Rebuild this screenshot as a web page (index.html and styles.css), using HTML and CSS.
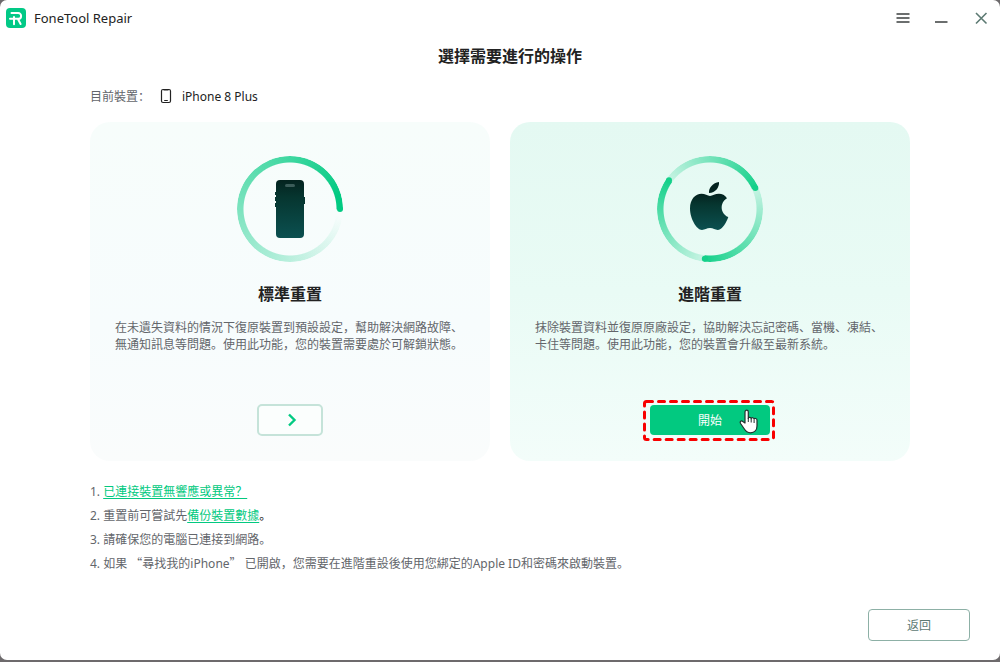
FILE: index.html
```html
<!DOCTYPE html>
<html lang="zh-Hans">
<head>
<meta charset="utf-8">
<meta name="viewport" content="width=device-width, initial-scale=1">
<title>FoneTool Repair</title>
<link rel="stylesheet" href="styles.css">
</head>
<body>
<div class="window">
  <header class="titlebar">
    <svg class="logo" viewBox="0 0 20 20" aria-hidden="true">
      <rect width="20" height="20" rx="4" fill="#02c986"/>
      <path d="M5.500 5H12.200a2.900 2.900 0 0 1 0 5.800H4M8 9v7.300M12.200 11.500l2.400 4.500" fill="none" stroke="#fff" stroke-width="2" stroke-linecap="round" stroke-linejoin="round"/>
    </svg>
    <span class="app-name">FoneTool Repair</span>
    <div class="window-controls">
      <button class="control" type="button" aria-label="選單"><svg viewBox="0 0 14 14"><path d="M.5 3h13M.5 7h13M.5 11h13" stroke="#6b6e6e" stroke-width="1.8"/></svg></button>
      <button class="control" type="button" aria-label="最小化"><svg viewBox="0 0 14 14"><path d="M0 11h12.500" stroke="#6b6e6e" stroke-width="2"/></svg></button>
      <button class="control" type="button" aria-label="關閉"><svg viewBox="0 0 14 14"><path d="M2 2l10.500 10.500M12.500 2L2 12.500" stroke="#5d7a73" stroke-width="1.600"/></svg></button>
    </div>
  </header>
  <main class="content">
    <h1 class="title">選擇需要進行的操作</h1>
    <div class="device">
      <span class="device-label">目前裝置：</span>
      <svg class="device-icon" viewBox="0 0 12 16" aria-hidden="true"><rect x="1.500" y="1.500" width="9" height="13" rx="1.500" fill="none" stroke="#222" stroke-width="1.200"/><path d="M3.500 2h5M4.200 12.500h3.600" stroke="#222" stroke-width="1.200"/></svg>
      <span class="device-name">iPhone 8 Plus</span>
    </div>
    <div class="cards">
      <section class="card card-standard">
        <div class="ring ring-single">
          <svg viewBox="0 0 106 106" aria-hidden="true">
            <defs><linearGradient id="dark" x1="0" y1="0" x2="0" y2="1"><stop offset="0" stop-color="#04231f"/><stop offset=".3" stop-color="#063630"/><stop offset="1" stop-color="#0b5050"/></linearGradient></defs>
            <circle cx="103" cy="53" r="3" fill="#02ca82"/>
            <path d="M38 36h2v3h-2zM38 41h2v4h-2zM38 47h2v4h-2zM66 41h2v7h-2z" fill="#063630"/>
            <rect x="39" y="24" width="28" height="58" rx="4" fill="url(#dark)"/>
            <rect x="48" y="28" width="10" height="3" rx="1.500" fill="#3b5c59"/>
          </svg>
        </div>
        <h2 class="card-title">標準重置</h2>
        <p class="card-text">在未遺失資料的情況下復原裝置到預設設定，幫助解決網路故障、無通知訊息等問題。使用此功能，您的裝置需要處於可解鎖狀態。</p>
        <button class="next" type="button" aria-label="標準重置"><svg viewBox="0 0 12 14"><path d="M3 1.500l5.500 5.500-5.500 5.500" fill="none" stroke="#02ca82" stroke-width="2.400"/></svg></button>
      </section>
      <section class="card card-advanced">
        <div class="ring ring-triple">
          <svg viewBox="0 0 106 106" aria-hidden="true">
            <circle cx="98.300" cy="31.900" r="3" fill="#15d08a"/>
            <circle cx="47.800" cy="102.700" r="3" fill="#15d08a"/>
            <circle cx="12" cy="24.300" r="3" fill="#15d08a"/>
            <path d="M62 26c.5 5-3.500 11-10 11-.6-5 4-10.300 10-11z" fill="#04231f"/>
            <path d="M53 40c2.500 0 5-2.200 9-2.200 3 0 6 1.500 8 4.400-8 4.800-6.500 15.800 1.300 18.800-1.700 5-5.800 12.800-10.300 13-3 .1-4.500-1.900-8-1.900s-5 1.900-8 1.900c-5 0-12-11-12-21.500 0-9.500 5.500-14.700 11.500-14.700 3.500 0 6 2.200 8.500 2.200z" fill="url(#dark)"/>
          </svg>
        </div>
        <h2 class="card-title">進階重置</h2>
        <p class="card-text">抹除裝置資料並復原原廠設定，協助解決忘記密碼、當機、凍結、卡住等問題。使用此功能，您的裝置會升級至最新系統。</p>
        <div class="start-wrap">
          <button class="start" type="button">開始</button>
          <svg class="highlight" viewBox="0 0 132 41" aria-hidden="true"><rect x="1.500" y="1.500" width="129" height="38" rx="2" fill="none" stroke="#f80000" stroke-width="3" stroke-dasharray="6 6" stroke-linecap="round"/></svg>
          <svg class="pointer" viewBox="0 0 20 25" aria-hidden="true"><path d="M6 14V3c0-2.500 3.300-2.500 3.300 0v6.500c0-1.600 2.900-1.600 2.900.2 0-1.500 2.900-1.300 2.900.6 0-1.500 2.900-1 2.900.8v6c0 4-2.500 6.700-6.500 6.700-3.500 0-5-1.800-6.500-4.300L1.600 14.500c-1.200-2 .8-3.200 2.200-2z" fill="#fff" stroke="#22302d" stroke-width="1.200" stroke-linejoin="round"/><path d="M9.300 9v4M12.200 10v3.500M15.100 11v3" stroke="#22302d"/></svg>
        </div>
      </section>
    </div>
    <ol class="notes">
      <li><a href="#">已連接裝置無響應或異常？</a></li>
      <li>重置前可嘗試先<a href="#">備份裝置數據</a><span class="stop">。</span></li>
      <li>請確保您的電腦已連接到網路。</li>
      <li>如果 <span class="wide">“</span>尋找我的iPhone<span class="wide">”</span> 已開啟，您需要在進階重設後使用您綁定的Apple ID和密碼來啟動裝置。</li>
    </ol>
  </main>
  <footer class="footer"><button class="back" type="button">返回</button></footer>
</div>
</body>
</html>
```

FILE: styles.css
```css
* { box-sizing: border-box; }
body {
  margin: 0;
  background: #6d6a6c;
  font-family: "Noto Sans", "Noto Sans CJK SC", sans-serif;
  font-size: 12px;
  color: #63666b;
}
h1, h2, p, ol { margin: 0; padding: 0; }
button { font: inherit; padding: 0; cursor: pointer; }
svg { display: block; }
.window {
  display: flex;
  flex-direction: column;
  min-height: calc(100vh - 2px);
  background: #fff;
  border-radius: 7px;
}
.titlebar {
  display: flex;
  align-items: center;
  height: 36px;
  padding: 0 12px 0 6px;
}
.logo { width: 20px; height: 20px; }
.app-name { margin-left: 8px; font-size: 13px; color: #222; }
.window-controls { display: flex; gap: 25px; margin-left: auto; }
.control { width: 14px; height: 14px; border: 0; background: none; }
.content { padding: 0 90px; }
.title {
  margin-top: 8px;
  padding-left: 20px;
  font-size: 16px;
  line-height: 24px;
  text-align: center;
  color: #222;
}
.device {
  display: flex;
  align-items: center;
  height: 20px;
  margin-top: 18px;
}
.device-label { width: 70px; }
.device-icon { width: 12px; height: 16px; }
.device-name { margin-left: 10px; color: #222; }
.cards {
  display: grid;
  grid-template-columns: 1fr 1fr;
  gap: 20px;
  margin-top: 16px;
}
.card {
  display: flex;
  flex-direction: column;
  align-items: center;
  padding: 34px 24px 25px;
  border-radius: 20px;
}
.card-standard { background: linear-gradient(#f7fdfb, #f7fcfd 60%, #fafcfc); }
.card-advanced { background: linear-gradient(#e4f9f2, #e9fbf5 50%, #f3fdfa); }
.ring { position: relative; width: 106px; height: 106px; }
.ring svg { position: relative; }
.ring::before {
  content: "";
  position: absolute;
  inset: 0;
  border-radius: 50%;
  -webkit-mask: radial-gradient(closest-side, transparent 46px, #000 47px);
  mask: radial-gradient(closest-side, transparent 46px, #000 47px);
}
.ring-single::before {
  background: conic-gradient(from 90deg, #02ca82 0deg, #02ca8200 1deg, #02ca8200 8deg, #02ca8240 90deg, #02ca8280 180deg, #02ca82c0 270deg, #02ca82 345deg, #02ca82 360deg);
}
.ring-triple::before {
  background: conic-gradient(from 65deg, #15d08a26 0deg, #15d08a 121deg, #15d08a26 122deg, #15d08a 240deg, #15d08a26 241deg, #15d08a 360deg);
}
.card-title {
  margin-top: 20px;
  font-size: 16px;
  line-height: 24px;
  color: #222;
}
.card-text {
  width: 100%;
  margin: 13px 0 51px;
  padding-left: 1px;
  line-height: 17px;
}
.next {
  display: grid;
  place-items: center;
  width: 66px;
  height: 32px;
  border: 2px solid #c5e3d9;
  border-radius: 5px;
  background: #fbfefd;
}
.next svg { width: 12px; height: 14px; margin-left: 3px; }
.start-wrap { position: relative; width: 120px; height: 32px; }
.start {
  width: 100%;
  height: 30px;
  margin-top: 1px;
  border: 0;
  border-radius: 4px;
  background: #02c980;
  color: #fff;
}
.highlight {
  position: absolute;
  top: -4px;
  left: -7px;
  width: 132px;
  height: 41px;
  pointer-events: none;
}
.pointer {
  position: absolute;
  top: 5px;
  right: 11px;
  width: 20px;
  height: 25px;
  pointer-events: none;
}
.notes {
  margin-top: 19px;
  list-style-position: inside;
  line-height: 24px;
}
.notes a { color: #02c980; text-underline-offset: 2px; }
.stop { color: #222; }
.wide { font-family: "Noto Sans CJK SC", sans-serif; line-height: 1; }
.footer {
  display: flex;
  justify-content: flex-end;
  margin-top: auto;
  padding: 20px 30px 19px;
}
.back {
  width: 102px;
  height: 32px;
  border: 1px solid #8db0a6;
  border-radius: 4px;
  background: #fff;
  color: #5d7a73;
}
```
